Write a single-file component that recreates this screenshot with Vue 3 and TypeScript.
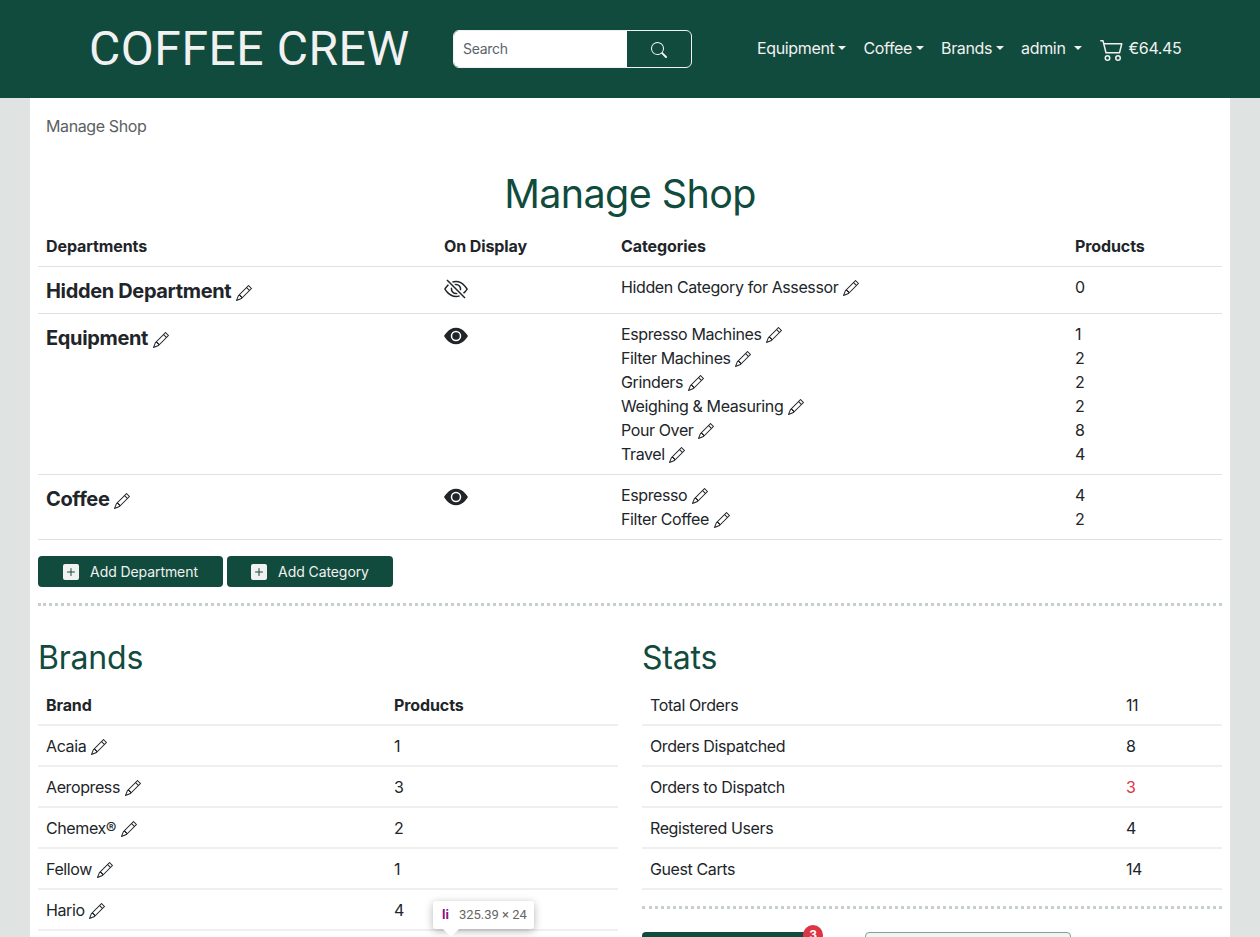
<script setup lang="ts">
interface Category {
  name: string;
  products: number;
}

interface Department {
  name: string;
  visible: boolean;
  categories: Category[];
}

const navItems = ["Equipment", "Coffee", "Brands", "admin"];

const departments: Department[] = [
  {
    name: "Hidden Department",
    visible: false,
    categories: [{ name: "Hidden Category for Assessor", products: 0 }],
  },
  {
    name: "Equipment",
    visible: true,
    categories: [
      { name: "Espresso Machines", products: 1 },
      { name: "Filter Machines", products: 2 },
      { name: "Grinders", products: 2 },
      { name: "Weighing & Measuring", products: 2 },
      { name: "Pour Over", products: 8 },
      { name: "Travel", products: 4 },
    ],
  },
  {
    name: "Coffee",
    visible: true,
    categories: [
      { name: "Espresso", products: 4 },
      { name: "Filter Coffee", products: 2 },
    ],
  },
];

const brands = [
  { name: "Acaia", products: 1 },
  { name: "Aeropress", products: 3 },
  { name: "Chemex®", products: 2 },
  { name: "Fellow", products: 1 },
  { name: "Hario", products: 4 },
];

const stats = [
  { label: "Total Orders", value: 11, alert: false },
  { label: "Orders Dispatched", value: 8, alert: false },
  { label: "Orders to Dispatch", value: 3, alert: true },
  { label: "Registered Users", value: 4, alert: false },
  { label: "Guest Carts", value: 14, alert: false },
];

const pencilPath =
  "M12.146.146a.5.5 0 0 1 .708 0l3 3a.5.5 0 0 1 0 .708l-10 10a.5.5 0 0 1-.168.11l-5 2a.5.5 0 0 1-.65-.65l2-5a.5.5 0 0 1 .11-.168zM11.207 2.5 13.5 4.793 14.793 3.5 12.5 1.207zm1.586 3L10.5 3.207 4 9.707V10h.5a.5.5 0 0 1 .5.5v.5h.5a.5.5 0 0 1 .5.5v.5h.293zm-9.761 5.175-.106.106-1.528 3.821 3.821-1.528.106-.106A.5.5 0 0 1 5 12.5V12h-.5a.5.5 0 0 1-.5-.5V11h-.5a.5.5 0 0 1-.468-.325";
const plusPath =
  "M2 0a2 2 0 0 0-2 2v12a2 2 0 0 0 2 2h12a2 2 0 0 0 2-2V2a2 2 0 0 0-2-2zm6.5 4.5v3h3a.5.5 0 0 1 0 1h-3v3a.5.5 0 0 1-1 0v-3h-3a.5.5 0 0 1 0-1h3v-3a.5.5 0 0 1 1 0";
</script>

<template>
  <div class="page">
    <header class="navbar">
      <a class="logo">COFFEE CREW</a>
      <form class="search" @submit.prevent>
        <input class="search__input" type="text" placeholder="Search" />
        <button class="search__btn" type="button" aria-label="Search">
          <svg width="16" height="16" viewBox="0 0 16 16" fill="currentColor">
            <path d="M11.742 10.344a6.5 6.5 0 1 0-1.397 1.398h-.001q.044.06.098.115l3.85 3.85a1 1 0 0 0 1.415-1.414l-3.85-3.85a1 1 0 0 0-.115-.1zM12 6.5a5.5 5.5 0 1 1-11 0 5.5 5.5 0 0 1 11 0" />
          </svg>
        </button>
      </form>
      <nav class="nav">
        <a v-for="item in navItems" :key="item" class="nav__link" :class="{ 'nav__link--user': item === 'admin' }">
          {{ item }}<span class="caret"></span>
        </a>
        <a class="nav__cart">
          <svg width="24" height="24" viewBox="0 0 16 16" fill="currentColor">
            <path d="M0 2.5A.5.5 0 0 1 .5 2H2a.5.5 0 0 1 .485.379L2.89 4H14.5a.5.5 0 0 1 .485.621l-1.5 6A.5.5 0 0 1 13 11H4a.5.5 0 0 1-.485-.379L1.61 3H.5a.5.5 0 0 1-.5-.5M3.14 5l1.25 5h8.22l1.25-5zM5 13a1 1 0 1 0 0 2 1 1 0 0 0 0-2m-2 1a2 2 0 1 1 4 0 2 2 0 0 1-4 0m9-1a1 1 0 1 0 0 2 1 1 0 0 0 0-2m-2 1a2 2 0 1 1 4 0 2 2 0 0 1-4 0" />
          </svg>
          €64.45
        </a>
      </nav>
    </header>

    <main class="content">
      <div class="breadcrumb">Manage Shop</div>
      <h1 class="title">Manage Shop</h1>

      <table class="table table--shop">
        <colgroup>
          <col style="width: 398px" />
          <col style="width: 177px" />
          <col style="width: 454px" />
          <col />
        </colgroup>
        <thead>
          <tr>
            <th>Departments</th>
            <th>On Display</th>
            <th>Categories</th>
            <th>Products</th>
          </tr>
        </thead>
        <tbody>
          <tr v-for="dept in departments" :key="dept.name">
            <td class="dept-cell">
              <span class="dept-name">{{ dept.name }}</span>
              <svg class="pencil pencil--dept" width="16" height="16" viewBox="0 0 16 16" fill="currentColor"><path :d="pencilPath" /></svg>
            </td>
            <td>
              <svg v-if="dept.visible" class="eye" width="24" height="24" viewBox="0 0 16 16" fill="currentColor">
                <path d="M10.5 8a2.5 2.5 0 1 1-5 0 2.5 2.5 0 0 1 5 0" />
                <path d="M0 8s3-5.5 8-5.5S16 8 16 8s-3 5.5-8 5.5S0 8 0 8m8 3.5a3.5 3.5 0 1 0 0-7 3.5 3.5 0 0 0 0 7" />
              </svg>
              <svg v-else class="eye" width="24" height="24" viewBox="0 0 16 16" fill="currentColor">
                <path d="M13.359 11.238C15.06 9.72 16 8 16 8s-3-5.5-8-5.5a7 7 0 0 0-2.79.588l.77.771A6 6 0 0 1 8 3.5c2.12 0 3.879 1.168 5.168 2.457A13 13 0 0 1 14.828 8q-.086.13-.195.288c-.335.48-.83 1.12-1.465 1.755q-.247.248-.517.486z" />
                <path d="M11.297 9.176a3.5 3.5 0 0 0-4.474-4.474l.823.823a2.5 2.5 0 0 1 2.829 2.829zm-2.943 1.299.822.822a3.5 3.5 0 0 1-4.474-4.474l.823.823a2.5 2.5 0 0 0 2.829 2.829" />
                <path d="M3.35 5.47q-.27.24-.518.487A13 13 0 0 0 1.172 8l.195.288c.335.48.83 1.12 1.465 1.755C4.121 11.332 5.881 12.5 8 12.5c.716 0 1.39-.133 2.02-.36l.77.772A7 7 0 0 1 8 13.5C3 13.5 0 8 0 8s.939-1.721 2.641-3.238l.708.709zm10.296 8.884-12-12 .708-.708 12 12z" />
              </svg>
            </td>
            <td>
              <div v-for="cat in dept.categories" :key="cat.name" class="line">
                {{ cat.name }}
                <svg class="pencil" width="16" height="16" viewBox="0 0 16 16" fill="currentColor"><path :d="pencilPath" /></svg>
              </div>
            </td>
            <td>
              <div v-for="cat in dept.categories" :key="cat.name" class="line">{{ cat.products }}</div>
            </td>
          </tr>
        </tbody>
      </table>

      <div class="actions">
        <button class="btn btn--dept" type="button">
          <svg width="16" height="16" viewBox="0 0 16 16" fill="currentColor"><path :d="plusPath" /></svg>
          Add Department
        </button>
        <button class="btn btn--cat" type="button">
          <svg width="16" height="16" viewBox="0 0 16 16" fill="currentColor"><path :d="plusPath" /></svg>
          Add Category
        </button>
      </div>

      <hr class="rule" />

      <div class="columns">
        <section>
          <h2 class="heading">Brands</h2>
          <table class="table table--lower">
            <colgroup>
              <col style="width: 348px" />
              <col />
            </colgroup>
            <thead>
              <tr>
                <th>Brand</th>
                <th>Products</th>
              </tr>
            </thead>
            <tbody>
              <tr v-for="brand in brands" :key="brand.name">
                <td>
                  {{ brand.name }}
                  <svg class="pencil" width="16" height="16" viewBox="0 0 16 16" fill="currentColor"><path :d="pencilPath" /></svg>
                </td>
                <td>{{ brand.products }}</td>
              </tr>
            </tbody>
          </table>
        </section>

        <section>
          <h2 class="heading">Stats</h2>
          <table class="table table--lower">
            <colgroup>
              <col style="width: 476px" />
              <col />
            </colgroup>
            <tbody>
              <tr v-for="stat in stats" :key="stat.label">
                <td>{{ stat.label }}</td>
                <td :class="{ 'is-alert': stat.alert }">{{ stat.value }}</td>
              </tr>
            </tbody>
          </table>
          <hr class="rule rule--stats" />
          <div class="stat-actions">
            <button class="btn btn--orders" type="button">
              <span class="badge">3</span>
            </button>
            <button class="btn btn--outline" type="button"></button>
          </div>
        </section>
      </div>
    </main>

    <div class="inspect-tip">
      <span class="inspect-tip__tag">li</span>
      <span class="inspect-tip__size">325.39 × 24</span>
    </div>
  </div>
</template>

<style>
html,
body {
  margin: 0;
  height: 100%;
  overflow: hidden;
  background: #dfe3e1;
}
</style>

<style scoped>
.page {
  position: relative;
  height: 937px;
  overflow: hidden;
  background: #dfe3e1;
  color: #212529;
  font-family: Inter, "Liberation Sans", sans-serif;
  font-size: 16px;
  line-height: 24px;
  letter-spacing: -0.39px;
}

.navbar {
  display: flex;
  align-items: center;
  height: 98px;
  padding-left: 89px;
  box-sizing: border-box;
  background: #114b3d;
  color: #f1f1f1;
}

.logo {
  width: 364px;
  font-family: Roboto, sans-serif;
  font-size: 48px;
  line-height: 58px;
  letter-spacing: 0.55px;
  white-space: nowrap;
}

.search {
  display: flex;
  width: 239px;
  height: 38px;
  box-sizing: border-box;
  border: 1px solid #f1f1f1;
  border-radius: 6px;
  overflow: hidden;
}

.search__input {
  width: 173px;
  padding: 0 9px 2px;
  border: 0;
  outline: 0;
  box-sizing: border-box;
  background: #fff;
  font-family: Inter, sans-serif;
  font-size: 14px;
  letter-spacing: -0.3px;
  color: #212529;
}

.search__input::placeholder {
  color: #5c636a;
  opacity: 1;
}

.search__btn {
  flex: 1;
  padding: 0;
  border: 0;
  background: transparent;
  color: #f1f1f1;
}

.search__btn svg {
  display: block;
  margin: 1px auto 0;
}

.nav {
  display: flex;
  align-items: center;
  margin-left: 65px;
  padding-bottom: 2px;
  letter-spacing: -0.35px;
}

.nav__link {
  display: inline-flex;
  align-items: center;
  margin-right: 17px;
  white-space: nowrap;
}

.nav__link--user {
  margin-right: 18px;
}

.caret {
  width: 0;
  height: 0;
  margin-left: 4px;
  border-top: 4.8px solid currentColor;
  border-left: 4.8px solid transparent;
  border-right: 4.8px solid transparent;
}

.nav__link--user .caret {
  margin-left: 8px;
}

.nav__cart {
  display: inline-flex;
  align-items: center;
  gap: 5px;
  white-space: nowrap;
}

.nav__cart svg {
  margin-top: 2px;
}

.content {
  width: 1200px;
  height: 839px;
  margin: 0 auto;
  padding: 0 8px;
  box-sizing: border-box;
  background: #fff;
}

.breadcrumb {
  padding: 16px 8px 0;
  color: #5c5f62;
}

.title {
  margin: 32px 0 0;
  font-size: 39.5px;
  line-height: 48px;
  font-weight: 400;
  letter-spacing: -0.6px;
  text-align: center;
  color: #114b3d;
}

.table {
  width: 100%;
  border-collapse: collapse;
  table-layout: fixed;
}

.table th {
  padding: 8px;
  font-weight: 700;
  letter-spacing: -0.1px;
  text-align: left;
}

.table td {
  padding: 8px;
  vertical-align: top;
}

.table--shop {
  margin-top: 8px;
}

.table--shop tr {
  border-bottom: 1px solid #dee2e6;
}

.table--lower tr {
  border-bottom: 2px solid #eef0f0;
}

.table--lower th,
.table--lower td {
  padding-top: 9px;
  padding-bottom: 7px;
  line-height: 23px;
}

.table td.dept-cell {
  padding-top: 9px;
  padding-bottom: 7px;
}

.dept-name {
  font-size: 20px;
  line-height: 30px;
  font-weight: 700;
  letter-spacing: -0.35px;
}

.line {
  height: 24px;
}

.pencil {
  vertical-align: -3px;
  margin-left: 0.5px;
}

.pencil--dept {
  margin-left: 5px;
}

.eye {
  display: block;
  margin-top: 2px;
}

.actions {
  display: flex;
  gap: 4px;
  margin-top: 16px;
}

.btn {
  display: inline-flex;
  align-items: center;
  justify-content: center;
  gap: 11px;
  height: 31px;
  padding: 0;
  border: 0;
  border-radius: 4px;
  background: #114b3d;
  color: #f1f1f1;
  font-family: Inter, sans-serif;
  font-size: 14px;
  letter-spacing: -0.08px;
}

.btn--dept {
  width: 185px;
}

.btn--cat {
  width: 166px;
}

.rule {
  margin: 16px 0 0;
  border: 0;
  border-top: 3px dotted #c6cfcc;
}

.columns {
  display: grid;
  grid-template-columns: 580px 580px;
  gap: 24px;
  margin-top: 31px;
}

.heading {
  margin: 0 0 6px;
  font-size: 32px;
  line-height: 42px;
  font-weight: 400;
  letter-spacing: -0.2px;
  color: #114b3d;
}

.is-alert {
  color: #dc3545;
}

.rule--stats {
  margin-top: 16px;
}

.stat-actions {
  display: flex;
  margin-top: 23px;
}

.btn--orders {
  position: relative;
  width: 165px;
  margin-right: 58px;
}

.btn--outline {
  width: 206px;
  border: 1px solid #7fa497;
  background: #f1f4f3;
}

.badge {
  position: absolute;
  top: -7px;
  right: -16px;
  width: 20px;
  height: 20px;
  border-radius: 50%;
  background: #dc3545;
  color: #fff;
  font-size: 12px;
  font-weight: 700;
  line-height: 20px;
  text-align: center;
}

.inspect-tip {
  position: absolute;
  left: 433px;
  top: 901px;
  display: flex;
  align-items: center;
  gap: 10px;
  width: 101px;
  height: 28px;
  padding: 0 0 0 9px;
  box-sizing: border-box;
  border-radius: 3px;
  background: #fff;
  box-shadow: 0 2px 8px rgb(0 0 0 / 30%);
  font-family: Roboto, sans-serif;
  font-size: 13px;
  letter-spacing: 0;
  white-space: nowrap;
}

.inspect-tip::after {
  content: "";
  position: absolute;
  left: 10px;
  top: 28px;
  border-top: 8px solid #fff;
  border-left: 8px solid transparent;
  border-right: 8px solid transparent;
}

.inspect-tip__tag {
  color: #881280;
  font-weight: 700;
}

.inspect-tip__size {
  color: #666;
}
</style>
